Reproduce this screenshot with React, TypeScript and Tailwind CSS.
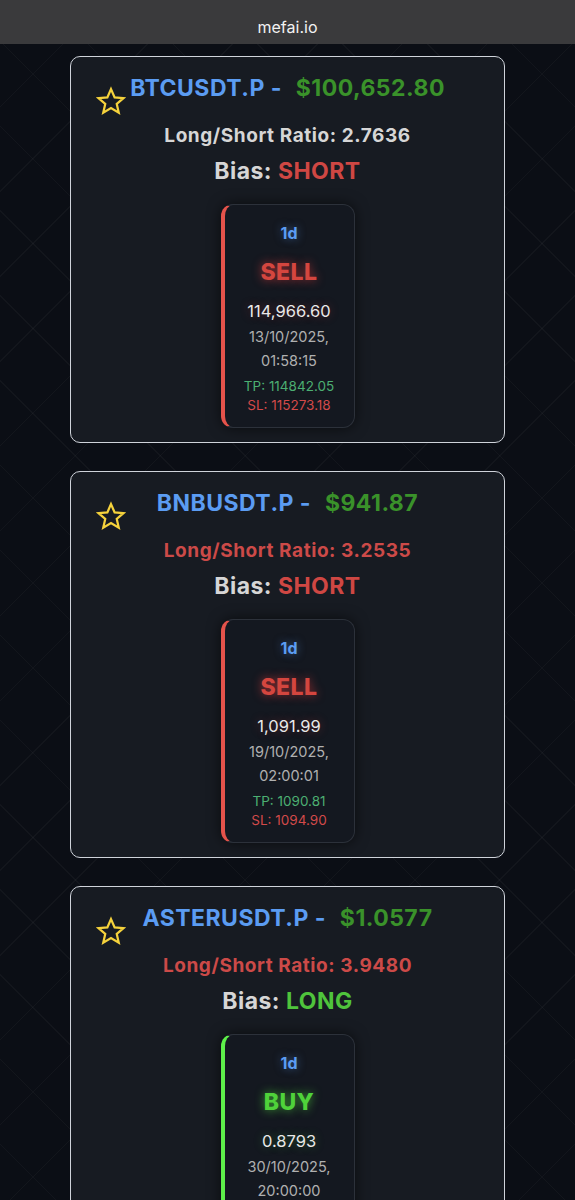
import React from 'react';

type Signal = {
  symbol: string;
  price: string;
  ratio: string;
  ratioRed: boolean;
  bias: 'SHORT' | 'LONG';
  tf: string;
  entry: string;
  date: string;
  time: string;
  tp: string;
  sl: string;
};

const signals: Signal[] = [
  {
    symbol: 'BTCUSDT.P',
    price: '$100,652.80',
    ratio: '2.7636',
    ratioRed: false,
    bias: 'SHORT',
    tf: '1d',
    entry: '114,966.60',
    date: '13/10/2025,',
    time: '01:58:15',
    tp: '114842.05',
    sl: '115273.18',
  },
  {
    symbol: 'BNBUSDT.P',
    price: '$941.87',
    ratio: '3.2535',
    ratioRed: true,
    bias: 'SHORT',
    tf: '1d',
    entry: '1,091.99',
    date: '19/10/2025,',
    time: '02:00:01',
    tp: '1090.81',
    sl: '1094.90',
  },
  {
    symbol: 'ASTERUSDT.P',
    price: '$1.0577',
    ratio: '3.9480',
    ratioRed: true,
    bias: 'LONG',
    tf: '1d',
    entry: '0.8793',
    date: '30/10/2025,',
    time: '20:00:00',
    tp: '0.8812',
    sl: '0.8751',
  },
];

function Star() {
  return (
    <svg width="30" height="30" viewBox="0 0 24 24" fill="none" stroke="#f5d23c" strokeWidth="1.8" strokeLinejoin="miter">
      <path d="M12 2.5l2.9 6.6 7.1.6-5.4 4.7 1.6 7-6.2-3.7-6.2 3.7 1.6-7L2 9.7l7.1-.6z" />
    </svg>
  );
}

function SignalBox({ s }: { s: Signal }) {
  const sell = s.bias === 'SHORT';
  return (
    <div
      className={
        sell
          ? 'w-[134px] rounded-[12px] border border-[#2c313a] border-l-4 border-l-[#e5534b] bg-[#141820] pt-4 pb-3 flex flex-col items-center shadow-[0_0_14px_rgba(0,0,0,0.6)]'
          : 'w-[134px] rounded-[12px] border border-[#2c313a] border-l-4 border-l-[#5ef04a] bg-[#141820] pt-4 pb-3 flex flex-col items-center shadow-[0_0_14px_rgba(0,0,0,0.6)]'
      }
    >
      <div className="text-[16px] font-bold text-[#5b9cf2] leading-[24px] [text-shadow:0_0_8px_rgba(91,156,242,0.5)]">{s.tf}</div>
      {sell ? (
        <div className="mt-[12px] text-[23px] font-extrabold tracking-[0.02em] text-[#d4463f] leading-[30px] [text-shadow:0_0_10px_rgba(230,60,60,0.7)]">SELL</div>
      ) : (
        <div className="mt-[12px] text-[23px] font-extrabold tracking-[0.02em] text-[#4fd23a] leading-[30px] [text-shadow:0_0_10px_rgba(80,220,60,0.7)]">BUY</div>
      )}
      <div
        className={
          sell
            ? 'mt-[12px] text-[16.5px] text-[#e8e8e8] leading-[24px] [text-shadow:0_0_10px_rgba(230,60,60,0.35)]'
            : 'mt-[12px] text-[16.5px] text-[#e8e8e8] leading-[24px] [text-shadow:0_0_10px_rgba(80,220,60,0.35)]'
        }
      >
        {s.entry}
      </div>
      <div className="mt-[2px] text-[14.5px] text-[#b0b0b0] leading-[24px] text-center">
        {s.date}
        <br />
        {s.time}
      </div>
      <div className="mt-[4px] text-[13.5px] text-[#4caf72] leading-[19px]">TP: {s.tp}</div>
      <div className="text-[13.5px] text-[#d24a4a] leading-[19px]">SL: {s.sl}</div>
    </div>
  );
}

function Card({ s }: { s: Signal }) {
  return (
    <div className="relative rounded-[10px] border border-[#cfd3da] bg-[#171b22] px-4 pt-[15px] pb-[14px] flex flex-col items-center">
      <div className="absolute left-[25px] top-[29px]">
        <Star />
      </div>
      <div className="text-[23px] font-bold tracking-[0.02em] leading-[32px]">
        <span className="text-[#5b9cf2]">{s.symbol} - </span>
        <span className="ml-[8px] text-[#3a922a]">{s.price}</span>
      </div>
      <div
        className={
          s.ratioRed
            ? 'mt-[18px] text-[19px] font-bold tracking-[0.03em] leading-[28px] text-[#cc4a48]'
            : 'mt-[18px] text-[19px] font-bold tracking-[0.03em] leading-[28px] text-[#d6d6d6]'
        }
      >
        Long/Short Ratio: {s.ratio}
      </div>
      <div className="mt-[5px] text-[23px] font-bold tracking-[0.02em] leading-[32px] text-[#d6d6d6]">
        Bias:{' '}
        <span className={s.bias === 'SHORT' ? 'text-[#cf4743]' : 'text-[#4fc43c]'}>{s.bias}</span>
      </div>
      <div className="mt-[17px]">
        <SignalBox s={s} />
      </div>
    </div>
  );
}

export default function App() {
  return (
    <div className="min-h-screen bg-[#0b0e15] font-['Inter',sans-serif]">
      <div className="h-[44px] bg-[#3a3a3c] flex items-center justify-center pt-[10px]">
        <span className="text-[16px] leading-[24px] text-[#f2f2f2]">mefai.io</span>
      </div>
      <div className="bg-[repeating-linear-gradient(45deg,transparent_0_59px,rgba(255,255,255,0.03)_59px_60px),repeating-linear-gradient(-45deg,transparent_0_59px,rgba(255,255,255,0.03)_59px_60px)] pt-[12px] pb-10">
        <div className="w-[435px] mx-auto flex flex-col gap-[28px]">
          {signals.map((s) => (
            <Card key={s.symbol} s={s} />
          ))}
        </div>
      </div>
    </div>
  );
}
